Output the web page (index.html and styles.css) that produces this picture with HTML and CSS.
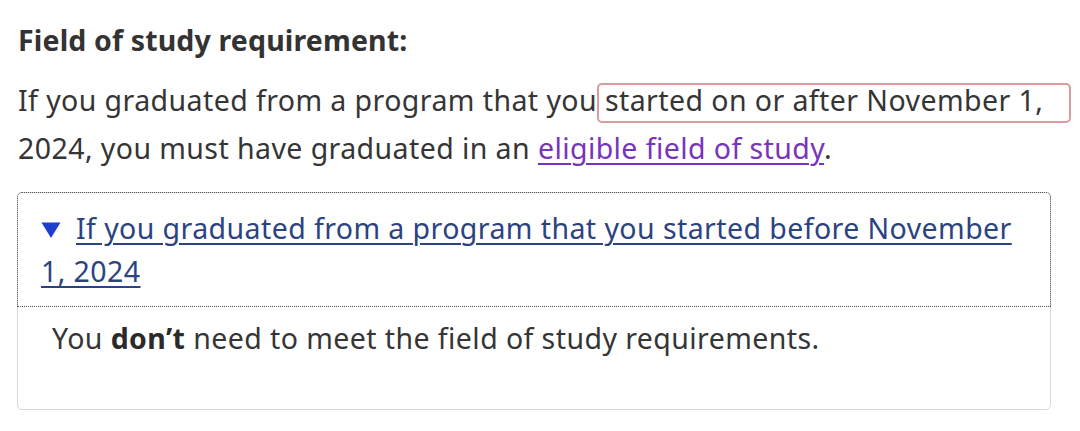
FILE: index.html
```html
<!DOCTYPE html>
<html lang="en">
<head>
<meta charset="utf-8">
<title>Field of study requirement</title>
<link rel="stylesheet" href="styles.css">
</head>
<body>
<main class="page">
  <h3 class="title">Field of study requirement:</h3>
  <p class="intro">If you graduated from a program that you<span class="mark"> started on or after November 1,</span> 2024, you must have graduated in an <a class="visited" href="#">eligible field of study</a>.</p>
  <details class="disclosure" open>
    <summary class="summary"><svg class="caret" width="20" height="16" viewBox="0 0 20 16" aria-hidden="true"><path d="M0.5 0.5 L19.5 0.5 L10 16 Z" fill="#1d3fcf"/></svg><span class="summary-text">If you graduated from a program that you started before November 1, 2024</span></summary>
    <div class="panel">
      <p class="panel-text">You <strong>don’t</strong> need to meet the field of study requirements.</p>
    </div>
  </details>
</main>
</body>
</html>
```

FILE: styles.css
```css
html, body {
  margin: 0;
  padding: 0;
  background: #ffffff;
}

body {
  font-family: "Noto Sans", "Open Sans", "DejaVu Sans", sans-serif;
  color: #353535;
  font-size: 28.5px;
  letter-spacing: 0.42px;
  line-height: 48px;
}

.page {
  padding: 16px 0 0 18px;
  width: 1066px;
  box-sizing: border-box;
}

.title {
  margin: 0;
  font-size: 28.5px;
  letter-spacing: 0.15px;
  line-height: 48px;
  font-weight: 700;
  color: #333;
}

.intro {
  margin: 12px 0 0 0;
}

.mark {
  position: relative;
}

.mark::after {
  content: "";
  position: absolute;
  left: 0;
  right: -28px;
  top: 2px;
  bottom: -4px;
  border: 2px solid #dc9a9f;
  border-radius: 5px;
  pointer-events: none;
}

.visited {
  color: #7834bc;
  text-decoration: underline;
  text-underline-offset: 4px;
  text-decoration-thickness: 2px;
}

.disclosure {
  margin: 20px 0 0 -1px;
  width: 1034px;
  box-sizing: border-box;
  border: 1px solid #d6d6d6;
  border-radius: 5px;
}

.summary {
  list-style: none;
  display: block;
  padding: 14px 20px 13px 23px;
  outline: 1px dotted #555;
  border-radius: 4px 4px 0 0;
  line-height: 43px;
  color: #2b4380;
  cursor: pointer;
}

.summary::-webkit-details-marker {
  display: none;
}

.caret {
  display: inline-block;
  vertical-align: 1px;
  margin-right: 15px;
}

.summary-text {
  text-decoration: underline;
  text-underline-offset: 4px;
  text-decoration-thickness: 1.5px;
}

.panel {
  padding: 8px 34px 47px 34px;
}

.panel-text {
  margin: 0;
  color: #353535;
}

.panel-text strong {
  font-weight: 700;
  color: #2a2a2a;
}
```
